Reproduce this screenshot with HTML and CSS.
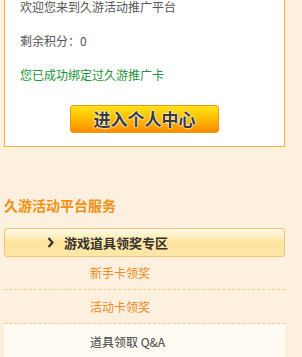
FILE: index.html
```html
<!DOCTYPE html>
<html>

<head>
     <title>久游活动推广平台</title>
     <link rel="stylesheet" href="styles.css">
</head>

<body>
     <div class="page">
          <div class="panel">
               <p class="line welcome">欢迎您来到久游活动推广平台</p>
               <p class="line points">剩余积分：0</p>
               <p class="line bound">您已成功绑定过久游推广卡</p>
               <div class="actions">
                    <a class="enter-btn" href="#">进入个人中心</a>
               </div>
          </div>

          <h2 class="section-title">久游活动平台服务</h2>

          <div class="menu">
               <div class="menu-head">
                    <svg class="arrow" width="7" height="11" viewBox="0 0 7 11">
                         <path d="M1.5 1 L5.5 5.5 L1.5 10" fill="none" stroke="#333" stroke-width="2.2"/>
                    </svg>
                    <span>游戏道具领奖专区</span>
               </div>
               <a class="menu-item" href="#">新手卡领奖</a>
               <a class="menu-item second" href="#">活动卡领奖</a>
               <a class="menu-item current" href="#">道具领取 Q&amp;A</a>
          </div>
     </div>
</body>

</html>
```

FILE: styles.css
```css
body {
     margin: 0;
     background-color: #fdf0df;
     font-family: "Noto Sans CJK SC", "Liberation Sans", sans-serif;
     font-size: 12px;
     color: #555;
}

.page {
     width: 281px;
     margin-left: 4px;
}

.panel {
     background-color: #fff;
     border: 1px solid #f0b43c;
     border-top: none;
     padding: 1px 0 13px 15px;
}

.line {
     margin: 0 0 14px;
     line-height: 20px;
}

.line.welcome {
     line-height: 12px;
     margin-bottom: 18px;
}

.line.bound {
     color: #1a9438;
     margin-bottom: 20px;
}

.actions {
     padding-left: 50px;
}

.enter-btn {
     display: block;
     width: 147px;
     height: 26px;
     line-height: 26px;
     text-align: center;
     border: 1px solid #e99a10;
     border-radius: 3px;
     background: linear-gradient(#ffe21a, #ffc000 45%, #ff8c00);
     font-size: 17px;
     font-weight: bold;
     color: #3a3a3a;
     text-decoration: none;
     text-shadow: 0 0 2px #fff, 0 0 2px #fff, 0 0 1px #fff;
}

.section-title {
     margin: 48px 0 13px;
     font-size: 14px;
     line-height: 20px;
     font-weight: bold;
     color: #f29112;
}

.menu-head {
     height: 27px;
     display: flex;
     align-items: center;
     border: 1px solid #f2c479;
     border-radius: 3px;
     background: linear-gradient(#fffaea, #ffe49c 50%, #ffe7a8);
     font-size: 13px;
     font-weight: bold;
     color: #333;
}

.arrow {
     margin: 0 10px 0 42px;
}

.menu-item {
     display: block;
     height: 32px;
     line-height: 32px;
     padding-left: 86px;
     border-bottom: 1px dashed #f3cc8c;
     color: #ef8a22;
     text-decoration: none;
}

.menu-item.second {
     height: 33px;
     line-height: 33px;
}

.menu-item.current {
     height: 36px;
     line-height: 36px;
     border-bottom: none;
     background-color: #fffaf2;
     color: #444;
}
```
